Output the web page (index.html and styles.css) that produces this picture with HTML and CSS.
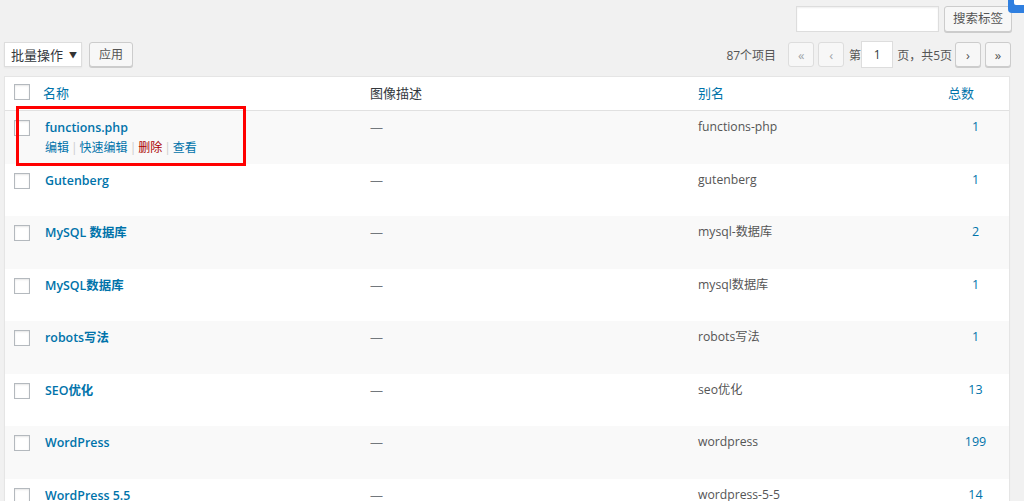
FILE: index.html
```html
<!DOCTYPE html>
<html lang="zh-CN">
<head>
<meta charset="utf-8">
<title>标签</title>
<link rel="stylesheet" href="styles.css">
</head>
<body>
<div class="help-tab"><span class="help-bar"></span></div>
<div class="page">
  <div class="search-row">
    <input class="search-input" type="text" value="">
    <button class="btn">搜索标签</button>
  </div>
  <div class="tablenav">
    <div class="bulk">
      <div class="select"><span>批量操作</span><span class="caret">▼</span></div>
      <button class="btn">应用</button>
    </div>
    <div class="pagination">
      <span class="count">87个项目</span>
      <span class="pbtn disabled">«</span>
      <span class="pbtn disabled">‹</span>
      <span class="plabel">第</span>
      <span class="pinput">1</span>
      <span class="plabel">页，共5页</span>
      <span class="pbtn">›</span>
      <span class="pbtn">»</span>
    </div>
  </div>
  <div class="table">
    <div class="row head">
      <div class="cell check"><span class="cb"></span></div>
      <div class="cell name"><span class="link">名称</span></div>
      <div class="cell desc">图像描述</div>
      <div class="cell slug"><span class="link">别名</span></div>
      <div class="cell num"><span class="link">总数</span></div>
    </div>
    <div class="row alt">
      <div class="cell check"><span class="cb"></span></div>
      <div class="cell name">
        <a class="title">functions.php</a>
        <div class="actions"><a>编辑</a><span class="sep">|</span><a>快速编辑</a><span class="sep">|</span><a class="del">删除</a><span class="sep">|</span><a>查看</a></div>
      </div>
      <div class="cell desc dash">—</div>
      <div class="cell slug">functions-php</div>
      <div class="cell num"><a>1</a></div>
    </div>
    <div class="row">
      <div class="cell check"><span class="cb"></span></div>
      <div class="cell name"><a class="title">Gutenberg</a></div>
      <div class="cell desc dash">—</div>
      <div class="cell slug">gutenberg</div>
      <div class="cell num"><a>1</a></div>
    </div>
    <div class="row alt">
      <div class="cell check"><span class="cb"></span></div>
      <div class="cell name"><a class="title">MySQL 数据库</a></div>
      <div class="cell desc dash">—</div>
      <div class="cell slug">mysql-数据库</div>
      <div class="cell num"><a>2</a></div>
    </div>
    <div class="row">
      <div class="cell check"><span class="cb"></span></div>
      <div class="cell name"><a class="title">MySQL数据库</a></div>
      <div class="cell desc dash">—</div>
      <div class="cell slug">mysql数据库</div>
      <div class="cell num"><a>1</a></div>
    </div>
    <div class="row alt">
      <div class="cell check"><span class="cb"></span></div>
      <div class="cell name"><a class="title">robots写法</a></div>
      <div class="cell desc dash">—</div>
      <div class="cell slug">robots写法</div>
      <div class="cell num"><a>1</a></div>
    </div>
    <div class="row">
      <div class="cell check"><span class="cb"></span></div>
      <div class="cell name"><a class="title">SEO优化</a></div>
      <div class="cell desc dash">—</div>
      <div class="cell slug">seo优化</div>
      <div class="cell num"><a>13</a></div>
    </div>
    <div class="row alt">
      <div class="cell check"><span class="cb"></span></div>
      <div class="cell name"><a class="title">WordPress</a></div>
      <div class="cell desc dash">—</div>
      <div class="cell slug">wordpress</div>
      <div class="cell num"><a>199</a></div>
    </div>
    <div class="row">
      <div class="cell check"><span class="cb"></span></div>
      <div class="cell name"><a class="title">WordPress 5.5</a></div>
      <div class="cell desc dash">—</div>
      <div class="cell slug">wordpress-5-5</div>
      <div class="cell num"><a>14</a></div>
    </div>
  </div>
</div>
<div class="highlight"></div>
</body>
</html>
```
FILE: styles.css
```css
html, body {
  margin: 0;
  padding: 0;
  background: #f1f1f1;
  height: 501px;
  overflow: hidden;
}
body {
  font-family: "Open Sans", "Noto Sans CJK SC", sans-serif;
  font-size: 13px;
  color: #444;
  position: relative;
}
.page {
  padding: 6px 14px 0 4px;
}
.help-tab {
  position: absolute;
  top: 0;
  right: 0;
  width: 16px;
  height: 13px;
  background: #2f7fe0;
  border-bottom-left-radius: 4px;
}
.help-bar {
  position: absolute;
  left: 6px;
  top: 0;
  width: 10px;
  height: 5px;
  background: #fff;
  border-bottom-left-radius: 2px;
}
.search-row {
  display: flex;
  justify-content: flex-end;
  gap: 5px;
  margin-right: -2px;
  height: 26px;
}
.search-input {
  width: 143px;
  height: 26px;
  box-sizing: border-box;
  border: 1px solid #ddd;
  background: #fff;
  box-shadow: inset 0 1px 2px rgba(0,0,0,.07);
  margin: 0;
  padding: 0;
}
.btn {
  font-family: "Open Sans", "Noto Sans CJK SC", sans-serif;
  font-size: 12.5px;
  color: #555;
  background: #f7f7f7;
  border: 1px solid #ccc;
  border-radius: 3px;
  box-shadow: 0 1px 0 #ccc;
  height: 26px;
  box-sizing: border-box;
  padding: 0 8px;
  margin: 0;
  line-height: 24px;
}
.tablenav {
  display: flex;
  justify-content: space-between;
  align-items: center;
  margin-top: 9px;
  height: 27px;
}
.bulk {
  display: flex;
  gap: 7px;
  align-items: center;
}
.select {
  width: 78px;
  height: 25px;
  box-sizing: border-box;
  border: 1px solid #ddd;
  background: #fff;
  box-shadow: 0 1px 2px rgba(0,0,0,.05);
  display: flex;
  align-items: center;
  padding-left: 6px;
  font-size: 13px;
  color: #32373c;
}
.caret {
  font-size: 8px;
  margin-left: 6px;
  color: #333;
}
.bulk .btn {
  padding: 0 9px;
  font-size: 12px;
  height: 25px;
  line-height: 23px;
}
.pagination {
  display: flex;
  align-items: center;
  font-size: 12px;
  color: #555;
  margin-right: -1px;
}
.count {
  margin-right: 8px;
}
.pbtn {
  width: 26px;
  height: 25px;
  box-sizing: border-box;
  border: 1px solid #ccc;
  background: #f7f7f7;
  border-radius: 3px;
  box-shadow: 0 1px 0 #ccc;
  display: flex;
  align-items: center;
  justify-content: center;
  font-size: 13px;
  color: #555;
  margin-left: 4px;
}
.pbtn.disabled {
  border-color: #ddd;
  box-shadow: none;
  color: #a0a5aa;
}
.plabel {
  margin-left: 5px;
}
.pinput {
  width: 32px;
  height: 27px;
  box-sizing: border-box;
  border: 1px solid #ddd;
  background: #fff;
  display: flex;
  align-items: center;
  justify-content: center;
  color: #32373c;
  margin-left: 0;
}
.pinput + .plabel {
  margin-left: 4px;
}
.pagination .pbtn:nth-last-child(2) {
  margin-left: 3px;
}
.table {
  margin-top: 8px;
  background: #fff;
  border: 1px solid #e5e5e5;
  box-shadow: 0 1px 1px rgba(0,0,0,.04);
}
.row {
  display: grid;
  grid-template-columns: 32px 323px 328px 254px 1fr;
  height: 52.55px;
  box-sizing: border-box;
}
.row.alt {
  background: #f9f9f9;
}
.row.head {
  height: 34px;
  border-bottom: 1px solid #e1e1e1;
}
.cell {
  padding-top: 6px;
  line-height: 20px;
}
.head .cell {
  padding-top: 6px;
  font-size: 13px;
  color: #32373c;
}
.check {
  padding-left: 9px;
  padding-top: 9px;
}
.head .check {
  padding-top: 7px;
}
.cb {
  display: block;
  width: 16px;
  height: 16px;
  box-sizing: border-box;
  border: 1px solid #b4b9be;
  background: #fff;
  box-shadow: inset 0 1px 2px rgba(0,0,0,.1);
}
.name {
  padding-left: 8px;
}
.head .name {
  padding-left: 6px;
}
.desc, .slug {
  padding-left: 10px;
}
.slug {
  color: #555;
  font-size: 12.2px;
}
.dash {
  color: #72777c;
}
.num {
  text-align: center;
  font-size: 12.5px;
}
.head .num {
  padding-right: 29px;
}
a, .link {
  color: #0073aa;
  text-decoration: none;
}
.title {
  font-weight: 600;
  font-size: 12.4px;
}
.actions {
  font-size: 12px;
  line-height: 20px;
  color: #ddd;
}
.actions .del {
  color: #a00;
}
.sep {
  margin: 0 2px;
  color: #ccc;
}
.highlight {
  position: absolute;
  left: 16px;
  top: 106px;
  width: 230px;
  height: 60px;
  box-sizing: border-box;
  border: 3px solid #f00;
}
```
